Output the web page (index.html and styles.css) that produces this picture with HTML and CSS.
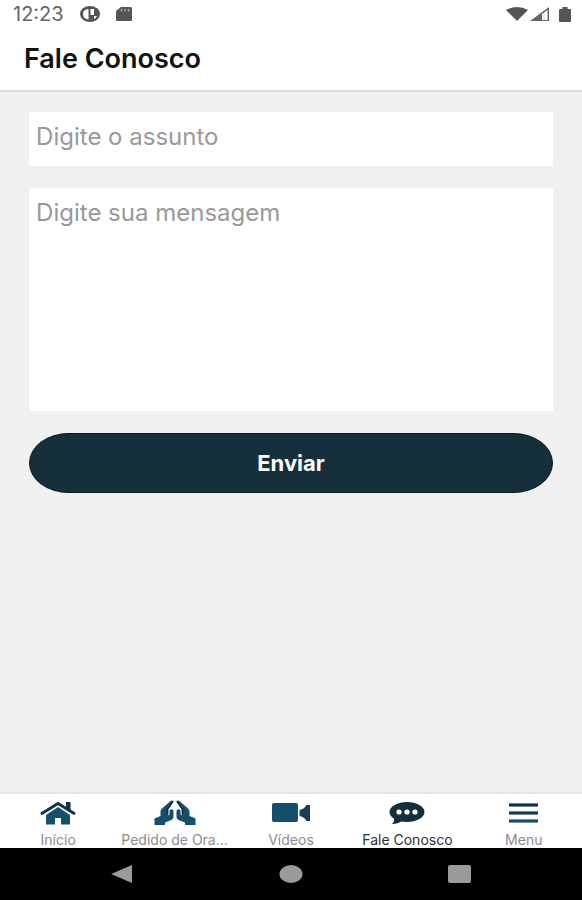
FILE: index.html
```html
<!DOCTYPE html>
<html lang="pt-BR">
<head>
<meta charset="utf-8">
<meta name="viewport" content="width=device-width, initial-scale=1">
<title>Fale Conosco</title>
<link rel="stylesheet" href="styles.css">
</head>
<body>
<div class="status">
  <span class="clock">12:23</span>
  <svg class="app-icon" width="20" height="16" viewBox="0 0 20 16"><ellipse cx="10" cy="8" rx="10" ry="8" fill="#555"/><path d="M8.500 3v10.500Q3 12.500 3 8t5.500-5zM10.500 3H14v6h-3.500zM14 10h3q-1 2-3 3z" fill="#fff"/></svg>
  <svg width="16" height="14" viewBox="0 0 16 14"><path d="M5 0h9.500q1.500 0 1.500 1.500v11q0 1.500-1.500 1.500h-13Q0 14 0 12.500V4z" fill="#555"/><path d="M5.500 2v2.500M9 2v2.500M12.500 2v2.500" stroke="#aaa" stroke-width="1.500"/></svg>
  <div class="signals">
    <svg width="22" height="14" viewBox="0 0 22 14"><path d="M0 3Q11-3 22 3L11 14z" fill="#555"/></svg>
    <svg width="19" height="14" viewBox="0 0 19 14"><path d="M0 14 19 0v14z" fill="#666"/><path d="M12 7 17.500 3v10H12z" fill="#fff"/><path d="M14 6v7" stroke="#ccc"/></svg>
    <svg class="battery" width="12" height="15" viewBox="0 0 12 15"><path d="M3.500 0h5v2H11q1 0 1 1v11q0 1-1 1H1q-1 0-1-1V3q0-1 1-1h2.500z" fill="#555"/></svg>
  </div>
</div>
<header class="header"><h1>Fale Conosco</h1></header>
<main>
  <form class="form">
    <input class="field" type="text" aria-label="Assunto" placeholder="Digite o assunto">
    <textarea class="field message" aria-label="Mensagem" placeholder="Digite sua mensagem"></textarea>
    <button class="send" type="button">Enviar</button>
  </form>
</main>
<nav class="tabs">
  <a href="#inicio"><svg width="36" height="24" viewBox="0 0 36 24"><path d="M6 14 18 6l12 8v9.500h-9V17h-6v6.500H6z" fill="#164f69"/><path d="M1 13 18 2.500 35 13" fill="none" stroke="#133248" stroke-width="3"/><path d="M26 1h4.500v9L26 7z" fill="#133248"/></svg><span>Início</span></a>
  <a href="#oracao"><svg width="42" height="26" viewBox="0 0 42 26"><g id="hand"><path d="M16 1.500Q18-.3 19.800 1.500L14.300 9.500v6q1.200-.5 1.200-2V10.500Q17.200 8 19.500 10.500v6.500q0 2-2.500 3.300L11 22.500V25H.5v-6.500L6.500 16v-4.500q0-1.500 1.500-3z" fill="#164f69"/><path d="M18.700 1.500 13.500 9v5" fill="none" stroke="#102c3c" stroke-width="1.500"/></g><use href="#hand" transform="matrix(-1 0 0 1 42 0)"/></svg><span>Pedido de Ora...</span></a>
  <a href="#videos"><svg width="38" height="20" viewBox="0 0 38 20"><rect y="0" width="26" height="19" rx="2" fill="#164f69"/><path d="M27.500 7q5-1 7-5H38v16h-3.500q-2-4-7-5z" fill="#164058"/></svg><span>Vídeos</span></a>
  <a class="active" href="#contato" aria-current="page"><svg width="36" height="24" viewBox="0 0 36 24"><ellipse cx="18" cy="11" rx="17.500" ry="10" fill="#142f3c"/><path d="M5 15q1 5-2 8 7 0 11-4z" fill="#142f3c"/><circle cx="10" cy="11" r="2.600" fill="#fff"/><circle cx="18" cy="11" r="2.600" fill="#fff"/><circle cx="26" cy="11" r="2.600" fill="#fff"/></svg><span>Fale Conosco</span></a>
  <a href="#menu"><svg width="29" height="20" viewBox="0 0 29 20"><path d="M0 2h29" stroke="#12304d" stroke-width="3.200"/><path d="M0 10h29" stroke="#143a55" stroke-width="3.200"/><path d="M0 18h29" stroke="#184b66" stroke-width="3.200"/></svg><span>Menu</span></a>
</nav>
<div class="system">
  <button type="button" aria-label="Voltar"><svg width="22" height="18" viewBox="0 0 22 18"><path d="M0 9 21 0v18z" fill="#9b9b9b"/></svg></button>
  <button type="button" aria-label="Tela inicial"><svg width="24" height="18" viewBox="0 0 24 18"><ellipse cx="12" cy="9" rx="11.500" ry="9" fill="#9b9b9b"/></svg></button>
  <button type="button" aria-label="Recentes"><svg width="24" height="18" viewBox="0 0 24 18"><rect width="23" height="18" rx="2" fill="#9b9b9b"/></svg></button>
</div>
</body>
</html>
```
FILE: styles.css
```css
* { box-sizing: border-box; }
body {
  margin: 0;
  min-height: 100vh;
  display: flex;
  flex-direction: column;
  background: #f0f0f0;
  font-family: Inter, "Liberation Sans", sans-serif;
}
svg { display: block; flex: none; }
.status {
  display: flex;
  align-items: center;
  gap: 16px;
  height: 28px;
  padding: 0 11px 0 13px;
  background: #fff;
}
.clock { color: #666; font-size: 20px; line-height: 28px; }
.signals { display: flex; align-items: center; gap: 2px; margin-left: auto; }
.battery { margin-left: 8px; }
.header {
  display: flex;
  align-items: center;
  height: 64px;
  padding: 0 24px;
  background: #fff;
  border-bottom: 2px solid #dcdcdc;
}
h1 { margin: 0; color: #111; font-size: 27px; font-weight: 600; line-height: 34px; }
main { flex: 1; padding: 20px 5%; }
.form { display: flex; flex-direction: column; gap: 22px; }
.field {
  display: block;
  width: 100%;
  height: 54px;
  margin: 0;
  padding: 10px 7px 16px;
  border: 0;
  border-radius: 0;
  background: #fff;
  color: #333;
  font: 24px/28px Inter, "Liberation Sans", sans-serif;
}
.field::placeholder { color: #999; opacity: 1; }
.message { height: 223px; padding-top: 11px; resize: none; }
.send {
  height: 60px;
  border: 1px solid #061b26;
  border-radius: 40px / 30px;
  background: #15303b;
  color: #fff;
  font: 700 22px/28px Inter, "Liberation Sans", sans-serif;
}
.tabs {
  display: grid;
  grid-template-columns: repeat(5, minmax(0, 1fr));
  height: 56px;
  background: #fff;
  border-top: 2px solid #e2e2e2;
}
.tabs a {
  display: grid;
  grid-template-rows: 37px 17px;
  place-items: center;
  color: #8c8c8c;
  font-size: 14px;
  line-height: 17px;
  text-decoration: none;
  white-space: nowrap;
}
.tabs .active { color: #303030; }
.system {
  display: flex;
  justify-content: center;
  align-items: center;
  height: 52px;
  background: #000;
}
.system button {
  display: grid;
  place-items: center;
  width: 29%;
  height: 52px;
  padding: 0;
  border: 0;
  background: none;
}
```
